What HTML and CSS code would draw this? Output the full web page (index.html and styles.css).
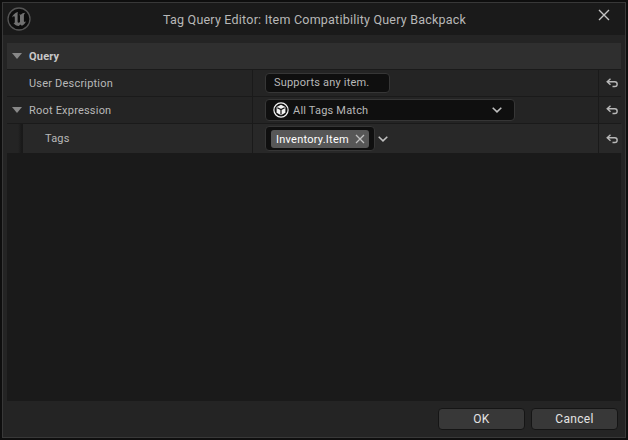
FILE: index.html
```html
<!DOCTYPE html>
<html lang="en">
<head>
<meta charset="utf-8">
<title>Tag Query Editor</title>
<link rel="stylesheet" href="styles.css">
</head>
<body>
<div class="window">
  <header class="titlebar">
    <svg class="logo" width="24" height="24" viewBox="0 0 24 24">
      <circle cx="12" cy="12" r="11" fill="#0c0c0c" stroke="#555" stroke-width="1.3"/>
      <path d="M11 4.900C7.800 5.700 5.500 8 5 10.700c.9-1.200 1.600-1.700 2.200-1.500.5.200.6.600.6 1.100v5c0 .7-.4.900-1.300.7 1.300 1.900 3 2.800 5.300 3l1.500-1.500 1.600 1.200c1.900-.8 3.300-2.300 4.100-4.500-.7.700-1.300.9-1.700.6-.3-.2-.4-.4-.4-.8V8.300c0-.9.500-1.700 1.400-2.500-2 .2-3.400.8-4.500 1.900-.5-.3-1-.4-1.600-.2.600.5.800.9.800 1.500v6c-.5.600-1 .9-1.500.8-.6-.1-.9-.4-.9-1V7c0-.8.100-1.500.4-2.100z" fill="#707070"/>
    </svg>
    <h1 class="title">Tag Query Editor: Item Compatibility Query Backpack</h1>
    <svg class="close" width="12" height="12" viewBox="0 0 12 12"><path d="M1 1l10 10M11 1L1 11" stroke="#c4c4c4" stroke-width="1.4" fill="none"/></svg>
  </header>
  <main class="details">
    <div class="category"><span class="arrow"></span><span class="heading">Query</span></div>
    <div class="row">
      <div class="name"><span class="label">User Description</span></div>
      <div class="value"><div class="textbox">Supports any item.</div></div>
      <div class="reset"><svg width="12" height="10" viewBox="0 0 12 10"><path d="M4.500 .8L1.200 3.800l3.300 3M1.500 3.800h7.300a2.350 2.350 0 0 1 0 4.700H6.500"/></svg></div>
    </div>
    <div class="row">
      <div class="name"><span class="arrow"></span><span class="label">Root Expression</span></div>
      <div class="value">
        <div class="combo">
          <svg width="16" height="16" viewBox="0 0 16 16"><circle cx="8" cy="8" r="7.100" fill="none" stroke="#f2f2f2" stroke-width="1.200"/><path d="M8 2.700l4.400 2.200v5.800L8 13.200l-4.400-2.500V4.900z" fill="#f2f2f2"/><path d="M4.300 5.700L8 7.600l3.700-1.900M8 7.600v4.800" stroke="#0f0f0f" stroke-width="1.200" fill="none"/></svg>
          <span class="comboText">All Tags Match</span>
          <svg class="chevron" width="10" height="6" viewBox="0 0 10 6"><path d="M.7.7L5 4.900 9.300.7"/></svg>
        </div>
      </div>
      <div class="reset"><svg width="12" height="10" viewBox="0 0 12 10"><path d="M4.500 .8L1.200 3.800l3.300 3M1.500 3.800h7.300a2.350 2.350 0 0 1 0 4.700H6.500"/></svg></div>
    </div>
    <div class="row child">
      <div class="name"><span class="indent"></span><span class="label">Tags</span></div>
      <div class="value">
        <div class="tagbox"><div class="tag"><span class="tagText">Inventory.Item</span><svg width="10" height="10" viewBox="0 0 10 10"><path d="M1 1l8 8M9 1L1 9" stroke="#c0c0c0" stroke-width="1.300" fill="none"/></svg></div></div>
        <svg class="chevron" width="10" height="6" viewBox="0 0 10 6"><path d="M.7.7L5 4.900 9.300.7"/></svg>
      </div>
      <div class="reset"><svg width="12" height="10" viewBox="0 0 12 10"><path d="M4.500 .8L1.200 3.800l3.300 3M1.500 3.800h7.300a2.350 2.350 0 0 1 0 4.700H6.500"/></svg></div>
    </div>
  </main>
  <footer class="actions">
    <button class="button">OK</button>
    <button class="button">Cancel</button>
  </footer>
</div>
</body>
</html>
```
FILE: styles.css
```css
* { box-sizing: border-box; }
body {
  margin: 0;
  padding: 2px;
  height: 440px;
  background: #0e0e0e;
  color: #b8b8b8;
  font: 11px/14px Roboto, "Liberation Sans", sans-serif;
  letter-spacing: 0.2px;
  overflow: hidden;
}
svg { display: block; flex: none; }
.window {
  width: 624px;
  height: 436px;
  border: 1px solid #383838;
  background: #242424;
  display: flex;
  flex-direction: column;
}
.titlebar {
  height: 32px;
  flex: none;
  background: #1a1a1a;
  display: grid;
  grid-template-columns: 24px 1fr 12px;
  padding: 0 15px 0 4px;
}
.logo { margin-top: 4px; }
.close { margin-top: 6px; }
.title {
  margin: 10px 0 0 132px;
  font-size: 12.5px;
  font-weight: 400;
  line-height: 14px;
  letter-spacing: 0.22px;
  white-space: nowrap;
}
.details {
  margin: 8px 4px 0;
  height: 358px;
  flex: none;
  background: #1a1a1a;
}
.category {
  height: 26px;
  background: #2f2f2f;
  display: flex;
  align-items: center;
  padding-left: 5px;
  margin-bottom: 1px;
}
.arrow {
  width: 10px;
  height: 6px;
  background: #888;
  clip-path: polygon(0 0, 100% 0, 50% 100%);
}
.heading { margin-left: 7px; padding-top: 1px; font-weight: 700; color: #c8c8c8; }
.row {
  height: 26px;
  margin-bottom: 1px;
  display: grid;
  grid-template-columns: 245px 345px 23px;
  column-gap: 1px;
  width: 614px;
}
.row > div { background: #242424; display: flex; align-items: center; }
.row .name { padding-left: 5px; }
.row .name .label { margin-left: 17px; padding-top: 1px; }
.row .name .arrow + .label { margin-left: 7px; }
.row .value { padding-left: 12px; }
.row .reset { padding-left: 7px; }
.reset svg { fill: none; stroke: #b8b8b8; stroke-width: 1.4; }
.child { height: 29px; }
.child > div { background: #282828; }
.child .name { padding-left: 0; }
.child .indent {
  width: 16px;
  height: 29px;
  background: linear-gradient(90deg, #242424 11px, #181818 15px, #1a1a1a);
}
.child .name .label { margin-left: 22px; padding-top: 0; }
.textbox, .combo, .tagbox {
  background: #0f0f0f;
  border: 1px solid #363636;
  border-radius: 4px;
  display: flex;
  align-items: center;
}
.textbox { width: 125px; height: 20px; padding: 0 0 1px 8px; }
.combo { width: 250px; height: 22px; padding: 0 12px 0 7px; }
.comboText { margin-left: 4px; padding-top: 1px; flex: 1; }
.tagbox { width: 110px; height: 25px; padding-left: 5px; }
.tag {
  width: 98px;
  height: 18px;
  border-radius: 3px;
  background: #575757;
  color: #fff;
  display: flex;
  align-items: center;
  justify-content: space-between;
  padding: 0 4px 0 5px;
}
.tagText { padding-top: 2px; letter-spacing: 0.25px; }
.chevron { fill: none; stroke: #c0c0c0; stroke-width: 1.5; }
.tagbox + .chevron { margin-left: 3px; }
.actions {
  display: flex;
  justify-content: flex-end;
  gap: 6px;
  padding: 7px 7px 0 0;
}
.button {
  width: 87px;
  height: 22px;
  padding: 0;
  border: 1px solid #151515;
  border-radius: 4px;
  background: #383838;
  color: #e4e4e4;
  font: 12px/14px Roboto, "Liberation Sans", sans-serif;
  letter-spacing: 0.3px;
}
```
